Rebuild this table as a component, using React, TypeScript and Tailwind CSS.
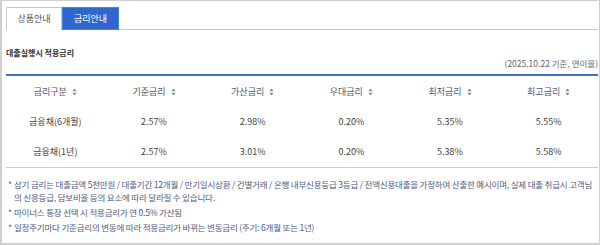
import React from "react";

const SortIcon = () => (
  <svg width="5" height="8" viewBox="0 0 5 8" className="ml-[5px] inline-block">
    <path d="M2.5 0.5 L4.6 3.2 L0.4 3.2 Z" fill="#8a8a8a" />
    <path d="M2.5 7.5 L4.6 4.8 L0.4 4.8 Z" fill="#8a8a8a" />
  </svg>
);

const headers = ["금리구분", "기준금리", "가산금리", "우대금리", "최저금리", "최고금리"];
const rows = [
  ["금융채(6개월)", "2.57%", "2.98%", "0.20%", "5.35%", "5.55%"],
  ["금융채(1년)", "2.57%", "3.01%", "0.20%", "5.38%", "5.58%"],
];

export default function App() {
  return (
    <div
      className="w-[600px] h-[245px] bg-white border-t border-r border-l-2 border-b-2 border-[#cfcfcf] overflow-hidden"
      style={{ fontFamily: '"Noto Sans CJK KR", "Noto Sans", sans-serif' }}
    >
      <div className="pl-[4px] pr-[1px] pt-[6px]">
        {/* tabs */}
        <div className="flex border-b border-[#c8c8c8] h-[23px]">
          <div className="w-[56px] h-[23px] flex items-center justify-center border border-[#c8c8c8] border-b-0 text-[9px] text-[#555] bg-white">
            상품안내
          </div>
          <div className="w-[57px] h-[23px] flex items-center justify-center bg-[#2f66cf] border border-[#3f86df] text-[9px] text-white">
            금리안내
          </div>
        </div>

        {/* title */}
        <div className="mt-[17px] text-[8px] font-bold text-[#333] leading-[12px]">대출실행시 적용금리</div>
        <div className="text-right text-[8.5px] text-[#666] leading-[12px] -mt-[2px]">(2025.10.22 기준, 연이율)</div>

        {/* table */}
        <div className="mt-[5px] border-t-2 border-[#3d6fd6] border-b border-b-[#c6c6f0]">
          <div className="grid grid-cols-6 h-[31px] items-center text-[9px] text-[#55566e]">
            {headers.map((h) => (
              <div key={h} className="flex items-center justify-center">
                <span>{h}</span>
                <SortIcon />
              </div>
            ))}
          </div>
          {rows.map((r, i) => (
            <div key={i} className="grid grid-cols-6 h-[30px] items-center text-[9px] text-[#444]">
              {r.map((c, j) => (
                <div key={j} className="text-center">
                  {c}
                </div>
              ))}
            </div>
          ))}
        </div>

        {/* notes */}
        <div className="mt-[10px] pl-[2px] text-[8.5px] tracking-[-0.2px] text-[#4f5a80] leading-[13px]">
          <div className="flex mb-[2px]">
            <span className="w-[6px] shrink-0 text-[#4a6ad0]">*</span>
            <span>
              상기 금리는 대출금액 5천만원 / 대출기간 12개월 / 만기일시상환 / 건별거래 / 은행 내부신용등급 3등급 / 전액신용대출을 가정하여 산출한 예시이며, 실제 대출 취급시 고객님의 신용등급, 담보비율 등의 요소에 따라 달라질 수 있습니다.
            </span>
          </div>
          <div className="flex mb-[2px]">
            <span className="w-[6px] shrink-0 text-[#4a6ad0]">*</span>
            <span>마이너스 통장 선택 시 적용금리가 연 0.5% 가산됨</span>
          </div>
          <div className="flex">
            <span className="w-[6px] shrink-0 text-[#4a6ad0]">*</span>
            <span>일정주기마다 기준금리의 변동에 따라 적용금리가 바뀌는 변동금리 (주기: 6개월 또는 1년)</span>
          </div>
        </div>
      </div>
    </div>
  );
}
